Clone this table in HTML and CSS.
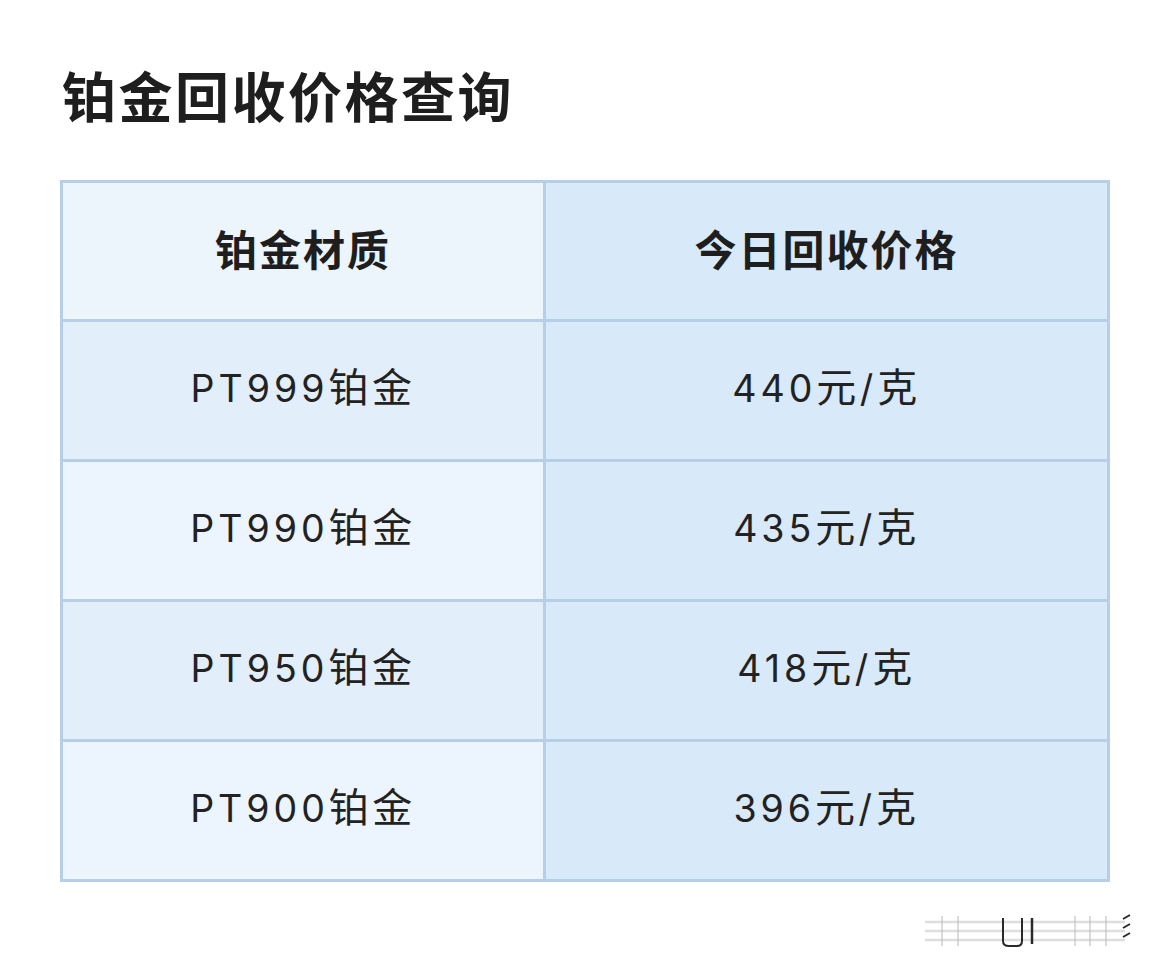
FILE: index.html
```html
<!DOCTYPE html>
<html lang="zh">
<head>
<meta charset="utf-8">
<title>铂金回收价格查询</title>
<link rel="stylesheet" href="styles.css">
</head>
<body>
<main class="page">
  <h1 class="title">铂金回收价格查询</h1>
  <table class="price-table">
    <thead>
      <tr>
        <th class="col-a">铂金材质</th>
        <th class="col-b">今日回收价格</th>
      </tr>
    </thead>
    <tbody>
      <tr class="odd"><td class="col-a"><span class="num">PT999</span>铂金</td><td class="col-b"><span class="num">440</span>元<span class="num">/</span>克</td></tr>
      <tr class="even"><td class="col-a"><span class="num">PT990</span>铂金</td><td class="col-b"><span class="num">435</span>元<span class="num">/</span>克</td></tr>
      <tr class="odd"><td class="col-a"><span class="num">PT950</span>铂金</td><td class="col-b"><span class="num">418</span>元<span class="num">/</span>克</td></tr>
      <tr class="even"><td class="col-a"><span class="num">PT900</span>铂金</td><td class="col-b"><span class="num">396</span>元<span class="num">/</span>克</td></tr>
    </tbody>
  </table>
  <div class="watermark">
    <svg width="215" height="40" viewBox="0 0 215 40">
      <g stroke="#c8c8c8" stroke-width="2.5" fill="none" opacity="0.6">
        <line x1="5" y1="12" x2="205" y2="12"/>
        <line x1="5" y1="21" x2="205" y2="21"/>
        <line x1="5" y1="30" x2="205" y2="30"/>
      </g>
      <g stroke="#bdbdbd" stroke-width="2" fill="none" opacity="0.55">
        <line x1="22" y1="6" x2="22" y2="36"/>
        <line x1="38" y1="6" x2="38" y2="36"/>
        <line x1="155" y1="6" x2="155" y2="36"/>
        <line x1="170" y1="6" x2="170" y2="36"/>
        <line x1="186" y1="6" x2="186" y2="36"/>
      </g>
      <path d="M83 8 V31 Q83 36 89 36 H97 Q102 36 102 31 V8" stroke="#2a2a2a" stroke-width="2" fill="none"/>
      <line x1="112" y1="8" x2="112" y2="34" stroke="#2a2a2a" stroke-width="2.5"/>
      <path d="M203 9 L210 5 M203 18 L210 14 M203 27 L210 23" stroke="#2a2a2a" stroke-width="2"/>
    </svg>
  </div>
</main>
</body>
</html>
```
FILE: styles.css
```css
html, body {
  margin: 0;
  padding: 0;
  background: #ffffff;
}
body {
  font-family: "Noto Sans CJK SC", "Noto Sans", sans-serif;
  color: #222222;
}
.page {
  padding: 60px 40px 0 60px;
  width: 1050px;
}
.title {
  margin: 0 0 0 2px;
  font-size: 54px;
  line-height: 70px;
  font-weight: 700;
  letter-spacing: 2.5px;
  color: #1e1e1e;
}
.price-table {
  margin-top: 50px;
  width: 1050px;
  border-collapse: collapse;
  border: 3px solid #b7cfe6;
  table-layout: fixed;
}
.price-table th,
.price-table td {
  border: 3px solid #b7cfe6;
  height: 129px;
  padding: 0 0 8px 0;
  text-align: center;
  vertical-align: middle;
}
.price-table th {
  height: 128px;
  font-size: 42px;
  font-weight: 700;
  letter-spacing: 2px;
  color: #1e1e1e;
}
.price-table td {
  font-size: 40px;
  line-height: 1;
  font-weight: 400;
  letter-spacing: 3.5px;
  color: #222222;
}
.num {
  font-family: "Inter", "Noto Sans", sans-serif;
  font-size: 37.5px;
  letter-spacing: 4px;
}
.col-a { width: 480px; }
thead .col-a { background: #ecf4fc; }
.odd .col-a { background: #e2eefa; }
.even .col-a { background: #ecf4fd; }
.col-b { background: #d8e9f9; }
.watermark {
  display: flex;
  justify-content: flex-end;
  margin-top: 28px;
  margin-right: -25px;
  filter: blur(0.5px);
}
```
